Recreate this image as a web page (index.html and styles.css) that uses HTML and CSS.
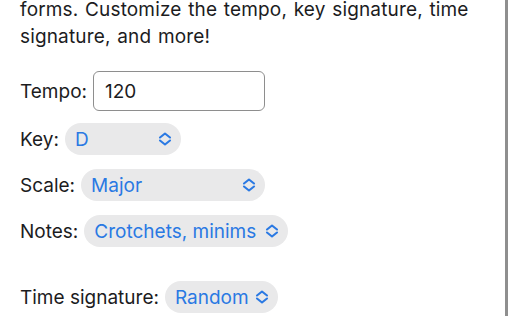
FILE: index.html
```html
<!DOCTYPE html>
<html>
<head>
<meta charset="utf-8">
<link rel="stylesheet" href="styles.css">
</head>
<body>
<div class="page">
  <p class="intro">forms. Customize the tempo, key signature, time signature, and more!</p>
  <div class="form">
    <div class="row tempo-row">
      <span class="label">Tempo:</span>
      <span class="input">120</span>
    </div>
    <div class="row key-row">
      <span class="label">Key:</span>
      <span class="pill w-key"><span class="val">D</span><svg class="chev" viewBox="0 0 14 14"><path d="M2 5.5 L7 1.5 L12 5.5 M2 8.5 L7 12.5 L12 8.5"/></svg></span>
    </div>
    <div class="row">
      <span class="label">Scale:</span>
      <span class="pill w-scale"><span class="val">Major</span><svg class="chev" viewBox="0 0 14 14"><path d="M2 5.5 L7 1.5 L12 5.5 M2 8.5 L7 12.5 L12 8.5"/></svg></span>
    </div>
    <div class="row">
      <span class="label">Notes:</span>
      <span class="pill w-notes"><span class="val">Crotchets, minims</span><svg class="chev" viewBox="0 0 14 14"><path d="M2 5.5 L7 1.5 L12 5.5 M2 8.5 L7 12.5 L12 8.5"/></svg></span>
    </div>
    <div class="row time-row">
      <span class="label">Time signature:</span>
      <span class="pill w-time"><span class="val">Random</span><svg class="chev" viewBox="0 0 14 14"><path d="M2 5.5 L7 1.5 L12 5.5 M2 8.5 L7 12.5 L12 8.5"/></svg></span>
    </div>
  </div>
</div>
</body>
</html>
```
FILE: styles.css
```css
html, body {
  margin: 0;
  padding: 0;
  background: #ffffff;
}
body {
  font-family: Inter, "Liberation Sans", sans-serif;
  font-size: 19px;
  color: #1c1c1e;
  overflow: hidden;
  height: 320px;
}
.page {
  width: 465px;
  height: 320px;
  padding: 0 20px;
  border-right: 3px solid #8f8f8f;
}
.intro {
  margin: -4px 0 0;
  line-height: 27px;
  letter-spacing: 0.15px;
  word-spacing: 1.2px;
}
.form {
  display: flex;
  flex-direction: column;
  margin-top: 21px;
}
.row {
  display: flex;
  align-items: center;
  gap: 6px;
  height: 32px;
  margin-top: 14px;
}
.tempo-row {
  height: 40px;
  margin-top: 0;
}
.key-row { margin-top: 12px; }
.time-row { margin-top: 34px; }
.input {
  box-sizing: border-box;
  width: 172px;
  height: 40px;
  border: 1px solid #8e8e8e;
  border-radius: 6px;
  padding: 0 11px;
  display: flex;
  align-items: center;
}
.pill {
  box-sizing: border-box;
  height: 32px;
  border-radius: 16px;
  background: #e9e9ea;
  color: #2a79e3;
  display: flex;
  align-items: center;
  justify-content: space-between;
  padding: 0 9px 0 10px;
}
.w-key { width: 116px; }
.w-scale { width: 184px; }
.w-notes { width: 204px; }
.w-time { width: 113px; }
.chev {
  width: 14px;
  height: 14px;
  flex: none;
  fill: none;
  stroke: #2a79e3;
  stroke-width: 2.1;
  stroke-linecap: round;
  stroke-linejoin: round;
}
```
